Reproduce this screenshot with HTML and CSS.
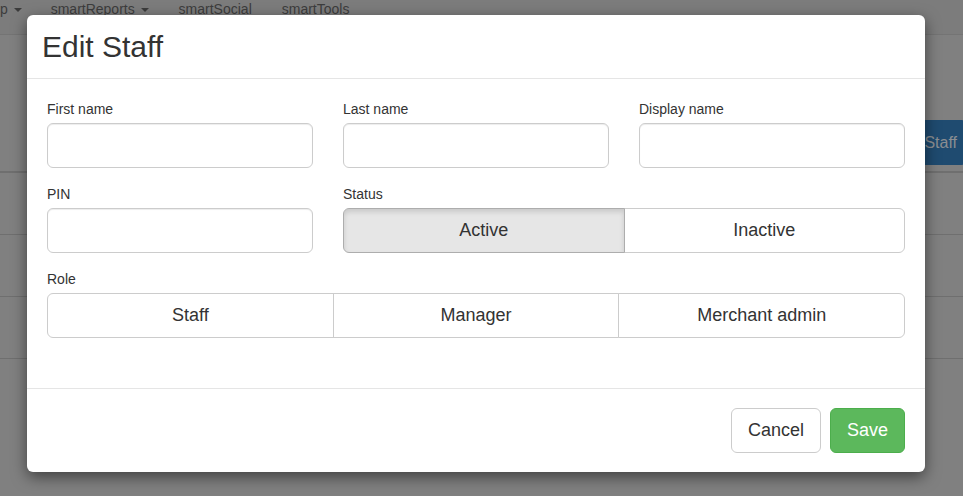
FILE: index.html
```html
<!DOCTYPE html>
<html lang="en">
<head>
<meta charset="utf-8">
<title>Edit Staff</title>
<link rel="stylesheet" href="styles.css">
</head>
<body>
<div class="page dimmed">
  <nav class="navbar">
    <ul class="nav">
      <li class="nav-item first">p <span class="caret"></span></li>
      <li class="nav-item">smartReports <span class="caret"></span></li>
      <li class="nav-item">smartSocial</li>
      <li class="nav-item">smartTools</li>
    </ul>
  </nav>
  <div class="toolbar">
    <div class="btn-primary">Staff</div>
  </div>
  <div class="table">
    <div class="thead"></div>
    <div class="trow"></div>
    <div class="trow"></div>
    <div class="trow"></div>
  </div>
</div>

<div class="modal">
  <div class="modal-header">
    <h4 class="modal-title">Edit Staff</h4>
  </div>
  <div class="modal-body">
    <div class="form-grid">
      <div class="form-group">
        <label class="label">First name</label>
        <input class="input" type="text">
      </div>
      <div class="form-group">
        <label class="label">Last name</label>
        <input class="input" type="text">
      </div>
      <div class="form-group">
        <label class="label">Display name</label>
        <input class="input" type="text">
      </div>
      <div class="form-group">
        <label class="label">PIN</label>
        <input class="input" type="text">
      </div>
      <div class="form-group span-2">
        <label class="label">Status</label>
        <div class="btn-group">
          <button class="seg active" type="button">Active</button>
          <button class="seg" type="button">Inactive</button>
        </div>
      </div>
      <div class="form-group span-3">
        <label class="label">Role</label>
        <div class="btn-group">
          <button class="seg" type="button">Staff</button>
          <button class="seg" type="button">Manager</button>
          <button class="seg" type="button">Merchant admin</button>
        </div>
      </div>
    </div>
  </div>
  <div class="modal-footer">
    <button class="btn btn-default" type="button">Cancel</button>
    <button class="btn btn-success" type="button">Save</button>
  </div>
</div>
</body>
</html>
```

FILE: styles.css
```css
* {
  box-sizing: border-box;
}

html, body {
  margin: 0;
}

body {
  background: #808080;
  font-family: "Liberation Sans", Arial, sans-serif;
  font-size: 14px;
  color: #333;
  height: 496px;
  overflow: hidden;
}

.navbar {
  height: 35px;
  background: #7c7c7c;
  border-bottom: 1px solid #747474;
}

.nav {
  list-style: none;
  margin: 0;
  padding: 0;
  display: flex;
}

.nav-item {
  padding: 0 15px;
  line-height: 18px;
  font-size: 14px;
  color: #3c3c3c;
  white-space: nowrap;
}

.nav-item.first {
  padding-left: 0;
  padding-right: 14px;
}

.caret {
  display: inline-block;
  width: 0;
  height: 0;
  margin-left: 2px;
  vertical-align: middle;
  border-top: 4px solid;
  border-right: 4px solid transparent;
  border-left: 4px solid transparent;
}

.toolbar {
  margin-top: 85px;
  height: 45px;
  display: flex;
  justify-content: flex-end;
}

.btn-primary {
  height: 45px;
  padding: 0 5px 0 12px;
  line-height: 43px;
  background: #1f4b70;
  border: 1px solid #1f4b70;
  color: #8b8e92;
  font-size: 16px;
  border-radius: 4px 0 0 4px;
}

.thead {
  height: 8px;
  border-bottom: 2px solid #6f6f6f;
}

.trow {
  height: 62px;
  border-bottom: 1px solid #6f6f6f;
}

.modal {
  position: absolute;
  z-index: 20;
  top: 15px;
  left: 27px;
  width: 898px;
  background: #fff;
  border-radius: 6px;
  box-shadow: 0 5px 15px rgba(0, 0, 0, 0.5);
}

.modal-header {
  padding: 15px;
  border-bottom: 1px solid #e5e5e5;
}

.modal-title {
  margin: 0;
  font-size: 30px;
  line-height: 33px;
  font-weight: normal;
  color: #333;
}

.modal-body {
  padding: 20px 20px 35px;
}

.form-grid {
  display: grid;
  grid-template-columns: repeat(3, 1fr);
  column-gap: 30px;
}

.form-group {
  margin-bottom: 16px;
  display: flex;
  flex-direction: column;
}

.form-group:last-child {
  margin-bottom: 15px;
}

.span-2 {
  grid-column: span 2;
}

.span-3 {
  grid-column: span 3;
}

.label {
  display: block;
  font-size: 14px;
  line-height: 20px;
  margin-bottom: 4px;
  color: #333;
}

.input {
  height: 45px;
  width: 100%;
  border: 1px solid #ccc;
  border-radius: 6px;
  box-shadow: inset 0 1px 1px rgba(0, 0, 0, 0.075);
  background: #fff;
  font-family: inherit;
  font-size: 18px;
  padding: 0 16px;
}

.btn-group {
  display: flex;
}

.seg {
  flex: 1 1 0;
  height: 45px;
  padding: 0 16px;
  border: 1px solid #ccc;
  background: #fff;
  color: #333;
  font-family: inherit;
  font-size: 18px;
  border-radius: 0;
}

.seg + .seg {
  margin-left: -1px;
}

.seg:first-child {
  border-radius: 6px 0 0 6px;
}

.seg:last-child {
  border-radius: 0 6px 6px 0;
}

.seg.active {
  background: #e6e6e6;
  border-color: #adadad;
  box-shadow: inset 0 3px 5px rgba(0, 0, 0, 0.125);
  position: relative;
}

.modal-footer {
  padding: 19px 20px;
  border-top: 1px solid #e5e5e5;
  display: flex;
  justify-content: flex-end;
  gap: 9px;
}

.btn {
  height: 45px;
  padding: 0 16px;
  font-family: inherit;
  font-size: 18px;
  border-radius: 6px;
  border: 1px solid #ccc;
}

.btn-default {
  background: #fff;
  color: #333;
}

.btn-success {
  background: #5cb85c;
  border-color: #4cae4c;
  color: #fff;
}
```
